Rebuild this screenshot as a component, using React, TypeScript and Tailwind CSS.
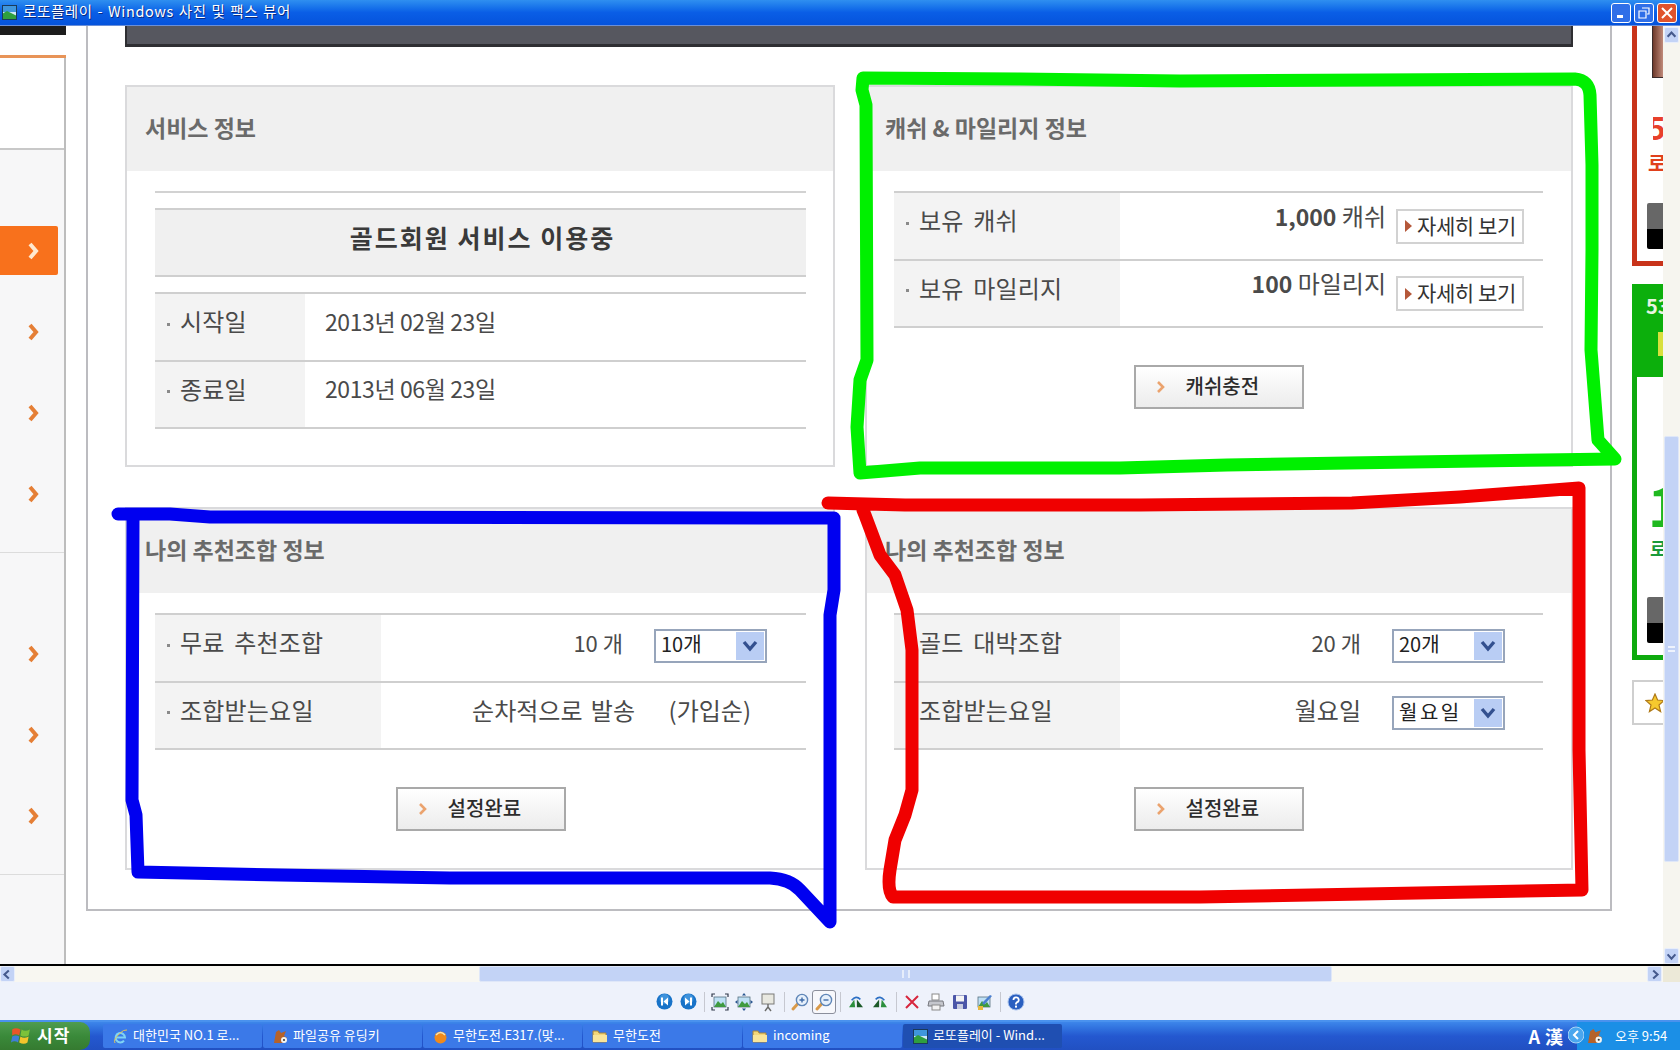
import React from "react";

const Chevron = ({ color = "#e57f36", size = 18 }: { color?: string; size?: number }) => (
  <svg width={size * 0.67} height={size} viewBox="0 0 12 18">
    <polyline points="3,2 9,9 3,16" fill="none" stroke={color} strokeWidth="4" />
  </svg>
);

const SideItem = ({ active = false }: { active?: boolean }) => (
  <div className="h-[81px] flex items-center">
    {active ? (
      <div className="w-[58px] h-[49px] bg-[#f8711c] rounded-r-[2px] flex items-center pl-[27px]">
        <Chevron color="#ffe9cf" />
      </div>
    ) : (
      <div className="pl-[27px] flex items-center">
        <Chevron />
      </div>
    )}
  </div>
);

const Sidebar = () => (
  <div className="w-[66px] h-full flex flex-col shrink-0">
    <div className="h-[9px] bg-[#1c1c1c]" />
    <div className="h-[20px]" />
    <div className="h-[3px] bg-[#e89458]" />
    <div className="flex-1 border-r-2 border-[#bdbdbd] flex flex-col">
      <div className="h-[92px] shrink-0 bg-white border-b-2 border-[#c8c8c8]" />
      <div className="flex-1 bg-[#f7f7f8] flex flex-col">
        <div className="h-[60px]" />
        <SideItem active />
        <SideItem />
        <SideItem />
        <SideItem />
        <div className="mt-[18px] h-[1px] bg-[#dcdcdc]" />
        <div className="h-[60px]" />
        <SideItem />
        <SideItem />
        <SideItem />
        <div className="mt-[18px] h-[1px] bg-[#dcdcdc]" />
      </div>
    </div>
  </div>
);

const Panel = ({ title, children }: { title: string; children: React.ReactNode }) => (
  <div className="border-2 border-[#dadadc] flex flex-col">
    <div className="h-[84px] shrink-0 bg-[#f0f0f0] flex items-center pl-[18px] pb-[4px] text-[23px] leading-none font-bold text-[#6a6a6a]">
      {title}
    </div>
    {children}
  </div>
);

const Row = ({ label, labelW, last = false, children }: { label: string; labelW: string; last?: boolean; children: React.ReactNode }) => (
  <div className={`flex border-t-2 border-[#cfcfcf] ${last ? "border-b-2 h-[69px]" : "h-[68px]"}`}>
    <div className={`${labelW} shrink-0 bg-[#f3f3f3] flex items-center pl-[12px] pb-[12px] text-[24px] text-[#4a4a4a] leading-none`}>
      <span className="w-[3px] h-[3px] bg-[#8a8a8a] mr-[10px] mt-[6px] shrink-0" />
      <span className="tracking-[0.2px] [word-spacing:4px] whitespace-nowrap">{label}</span>
    </div>
    <div className="flex-1 flex items-center text-[24px] text-[#4a4a4a] leading-none">{children}</div>
  </div>
);

const Select = ({ value, wide = false }: { value: string; wide?: boolean }) => (
  <div className="w-[113px] h-[34px] mb-[5px] border-2 border-[#97a5bb] bg-white flex items-center justify-between pl-[5px] pr-[1px] text-[20px] leading-none text-[#222]">
    <span className={`pb-[3px] ${wide ? "tracking-[2.5px]" : ""}`}>{value}</span>
    <span className="w-[28px] h-[28px] bg-[#b9cdf4] flex items-center justify-center">
      <svg width="16" height="12" viewBox="0 0 16 12">
        <polyline points="2,2 8,9 14,2" fill="none" stroke="#33508f" strokeWidth="3.4" />
      </svg>
    </span>
  </div>
);

const DetailBtn = () => (
  <div className="w-[128px] h-[35px] border-2 border-[#d2d2d2] bg-white flex items-center pl-[7px] text-[21px] leading-none text-[#333] shrink-0">
    <svg width="7" height="12" viewBox="0 0 7 12" className="mr-[5px]">
      <polygon points="0,0 7,6 0,12" fill="#b5583a" />
    </svg>
    <span className="pb-[2px] whitespace-nowrap tracking-[-0.4px]">자세히 보기</span>
  </div>
);

const BigBtn = ({ label }: { label: string }) => (
  <div className="w-[170px] h-[44px] mx-auto border-2 border-[#a9a9a9] bg-gradient-to-b from-white to-[#ececec] flex items-center pl-[20px] text-[20px] font-medium leading-none text-[#2c2c2c]">
    <svg width="10" height="14" viewBox="0 0 10 14" className="mr-[20px]">
      <polyline points="2,2 7,7 2,12" fill="none" stroke="#eba36e" strokeWidth="2.6" />
    </svg>
    <span className="pb-[2px]">{label}</span>
  </div>
);

const Main = () => (
  <div className="w-[1526px] h-[885px] ml-[20px] shrink-0 border-2 border-t-0 border-[#bcbcc0] pl-[37px]">
    <div className="w-[1448px] h-[21px] bg-[#56575f] border-b-[3px] border-l-2 border-r-2 border-[#2e2e32]" />
    <div className="grid grid-cols-[710px_708px] grid-rows-[382px_363px] gap-x-[30px] gap-y-[40px] mt-[38px]">
      <Panel title="서비스 정보">
        <div className="ml-[28px] mr-[27px] mt-[20px]">
          <div className="h-[2px] bg-[#d2d2d2]" />
          <div className="mt-[15px] h-[69px] bg-[#f0f0f0] border-y-2 border-[#cfcfcf] flex items-center justify-center pl-[4px] pb-[10px] text-[25px] font-bold tracking-[2px] leading-none text-[#3a3a3a]">
            골드회원 서비스 이용중
          </div>
          <div className="mt-[15px]">
            <Row label="시작일" labelW="w-[150px]">
              <span className="pl-[20px] pb-[12px] text-[23px] tracking-[-0.4px]">2013년 02월 23일</span>
            </Row>
            <Row label="종료일" labelW="w-[150px]" last>
              <span className="pl-[20px] pb-[12px] text-[23px] tracking-[-0.4px]">2013년 06월 23일</span>
            </Row>
          </div>
        </div>
      </Panel>
      <Panel title="캐쉬 & 마일리지 정보">
        <div className="ml-[27px] mr-[28px] mt-[20px]">
          <Row label="보유 캐쉬" labelW="w-[226px]">
            <div className="flex-1 flex items-center justify-end pr-[19px] gap-[10px]">
              <span className="pb-[21px]"><b className="font-bold text-[23px]">1,000</b> 캐쉬</span>
              <DetailBtn />
            </div>
          </Row>
          <Row label="보유 마일리지" labelW="w-[226px]" last>
            <div className="flex-1 flex items-center justify-end pr-[19px] gap-[10px]">
              <span className="pb-[21px]"><b className="font-bold text-[23px]">100</b> 마일리지</span>
              <DetailBtn />
            </div>
          </Row>
          <div className="mt-[37px]"><BigBtn label="캐쉬충전" /></div>
        </div>
      </Panel>
      <Panel title="나의 추천조합 정보">
        <div className="ml-[28px] mr-[27px] mt-[20px]">
          <Row label="무료 추천조합" labelW="w-[226px]">
            <div className="flex-1 flex items-center justify-end pr-[39px] gap-[31px]">
              <span className="pb-[12px] text-[22px]">10 개</span>
              <Select value="10개" />
            </div>
          </Row>
          <Row label="조합받는요일" labelW="w-[226px]" last>
            <div className="flex-1 flex items-center justify-end pr-[55px]">
              <span className="pb-[12px] whitespace-pre [word-spacing:3px]">순차적으로 발송    (가입순)</span>
            </div>
          </Row>
          <div className="mt-[37px]"><BigBtn label="설정완료" /></div>
        </div>
      </Panel>
      <Panel title="나의 추천조합 정보">
        <div className="ml-[27px] mr-[28px] mt-[20px]">
          <Row label="골드 대박조합" labelW="w-[226px]">
            <div className="flex-1 flex items-center justify-end pr-[38px] gap-[31px]">
              <span className="pb-[12px] text-[22px]">20 개</span>
              <Select value="20개" />
            </div>
          </Row>
          <Row label="조합받는요일" labelW="w-[226px]" last>
            <div className="flex-1 flex items-center justify-end pr-[38px] gap-[31px]">
              <span className="pb-[12px]">월요일</span>
              <Select value="월요일" wide />
            </div>
          </Row>
          <div className="mt-[37px]"><BigBtn label="설정완료" /></div>
        </div>
      </Panel>
    </div>
  </div>
);

const AdDark = () => (
  <div className="w-[16px] h-[46px] ml-auto flex flex-col rounded-l-[2px] overflow-hidden shrink-0">
    <div className="h-[26px] bg-[#676767]" />
    <div className="flex-1 bg-black" />
  </div>
);

const Ads = () => (
  <div className="w-[31px] ml-[20px] shrink-0 flex flex-col overflow-hidden">
    <div className="h-[240px] shrink-0 border-l-[5px] border-b-[5px] border-[#c8331a] flex flex-col">
      <div className="w-[11px] h-[52px] ml-auto bg-gradient-to-r from-[#6e3a2c] to-[#c08a7a] border-l border-b border-[#3a2a2a]" />
      <div className="h-[32px]" />
      <div className="ml-auto w-[10px] h-[38px] overflow-hidden text-[#e8402a] font-bold text-[32px] leading-none">
        <span className="block -ml-[6px]">5</span>
      </div>
      <div className="mt-[5px] ml-[11px] w-[15px] overflow-hidden text-[20px] font-bold leading-none text-[#e0401c]">로</div>
      <div className="h-[30px]" />
      <AdDark />
    </div>
    <div className="h-[18px] shrink-0" />
    <div className="h-[376px] shrink-0 border-l-[5px] border-b-[5px] border-[#0eaa0e] flex flex-col">
      <div className="h-[93px] -ml-[5px] bg-[#0caf0c] flex flex-col shrink-0">
        <div className="pl-[14px] pt-[12px] text-[20px] font-bold leading-none text-[#e8f5e0] whitespace-nowrap">53</div>
        <div className="mt-[16px] ml-[26px] w-[5px] h-[24px] bg-[#d8e03c]" />
      </div>
      <div className="h-[100px]" />
      <div className="ml-[11px] w-[15px] overflow-hidden text-[54px] font-bold leading-none text-[#1fb81f]">1</div>
      <div className="mt-[8px] ml-[13px] w-[13px] overflow-hidden text-[18px] font-bold leading-none text-[#1a9a3a]">로</div>
      <div className="h-[40px]" />
      <AdDark />
    </div>
    <div className="h-[20px] shrink-0" />
    <div className="h-[45px] shrink-0 border-2 border-r-0 border-[#cfcfcf] flex items-center justify-end">
      <svg width="20" height="20" viewBox="0 0 20 20" className="-mr-[2px]">
        <polygon points="10,1 12.6,7 19,7.6 14,12 15.6,18.6 10,15 4.4,18.6 6,12 1,7.6 7.4,7" fill="#f6c92e" stroke="#b07a18" strokeWidth="1.2" />
      </svg>
    </div>
  </div>
);

const ScrollBtn = ({ dir }: { dir: "up" | "down" | "left" | "right" }) => {
  const pts = { up: "3,9 7.5,4 12,9", down: "3,5 7.5,10 12,5", left: "9,3 4,7.5 9,12", right: "6,3 11,7.5 6,12" }[dir];
  return (
    <div className="w-[15px] h-[16px] shrink-0 rounded-[2px] bg-[#c3d3f6] border border-[#e8eefb] flex items-center justify-center">
      <svg width="15" height="15" viewBox="0 0 15 15">
        <polyline points={pts} fill="none" stroke="#45598c" strokeWidth="2.4" />
      </svg>
    </div>
  );
};

const VScroll = () => (
  <div className="w-[17px] h-full ml-0 shrink-0 bg-[#f6f5ef] flex flex-col items-center">
    <div className="pt-[1px]"><ScrollBtn dir="up" /></div>
    <div className="h-[393px]" />
    <div className="w-[15px] h-[426px] bg-[#c3d3f6] border border-[#dfe7f8] rounded-[2px] flex items-center justify-center">
      <div className="w-[7px] h-[6px] border-y-2 border-[#eef3fd]" />
    </div>
    <div className="flex-1" />
    <div><ScrollBtn dir="down" /></div>
  </div>
);

const HScroll = () => (
  <div className="h-[16px] flex bg-[#f8f7f1] shrink-0">
    <ScrollBtn dir="left" />
    <div className="w-[464px]" />
    <div className="w-[853px] h-[16px] bg-[#c3d3f6] border border-[#dfe7f8] rounded-[2px] flex items-center justify-center">
      <div className="w-[8px] h-[8px] border-x-2 border-[#e6edfb]" />
    </div>
    <div className="flex-1" />
    <ScrollBtn dir="right" />
    <div className="w-[17px] bg-[#ece9d8] ml-[1px]" />
  </div>
);

const Tool = ({ active = false, children }: { active?: boolean; children: React.ReactNode }) => (
  <div className={`w-[24px] h-[24px] flex items-center justify-center rounded-[3px] ${active ? "border border-[#8b8f9c] bg-[#f7f8fc]" : ""}`}>
    {children}
  </div>
);

const Sep = () => <div className="w-[1px] h-[20px] bg-[#c6c8d0] mx-[3.5px]" />;

const Pic = () => (
  <>
    <rect x="3" y="4" width="12" height="10" fill="#bfe0f5" stroke="#55707f" strokeWidth="0.8" />
    <path d="M3 14 L7 8 L10 11 L12 9 L15 14Z" fill="#3f9a3f" />
  </>
);

const Round = ({ kind }: { kind: "prev" | "next" }) => (
  <svg width="17" height="17" viewBox="0 0 17 17">
    <circle cx="8.5" cy="8.5" r="8" fill="#1873c8" />
    <circle cx="8.5" cy="6" r="5" fill="#5aa8ea" opacity="0.6" />
    {kind === "prev" ? (
      <path d="M5 4.5h2v8H5z M12 4.5v8L7.5 8.5z" fill="#fff" />
    ) : (
      <path d="M10 4.5h2v8h-2z M5 4.5v8L9.5 8.5z" fill="#fff" />
    )}
  </svg>
);

const Magnifier = ({ sign }: { sign: "+" | "-" }) => (
  <svg width="20" height="20" viewBox="0 0 20 20">
    <line x1="3" y1="17" x2="8.5" y2="11" stroke="#d99a4a" strokeWidth="3" strokeLinecap="round" />
    <circle cx="12" cy="8" r="5.6" fill="#e6f0fb" stroke="#5f86b8" strokeWidth="1.4" />
    <path d={sign === "+" ? "M9.5 8h5M12 5.5v5" : "M9.5 8h5"} stroke="#3e6aa8" strokeWidth="1.4" />
  </svg>
);

const Rotate = ({ flip = false }: { flip?: boolean }) => (
  <svg width="16" height="14" viewBox="0 0 18 16" className={flip ? "-scale-x-100" : ""}>
    <path d="M1 14 L7 5 L8 14Z" fill="#2b8f3c" />
    <path d="M10 14 L10 5 L17 14Z" fill="#1c5a28" />
    <path d="M4 6 Q9 0 14 5" fill="none" stroke="#2c6fc4" strokeWidth="1.8" />
  </svg>
);

const Toolbar = () => (
  <div className="h-[38px] bg-[#eef2fb] flex items-center justify-center shrink-0 pt-[1px]">
    <Tool><Round kind="prev" /></Tool>
    <Tool><Round kind="next" /></Tool>
    <Sep />
    <Tool>
      <svg width="18" height="18" viewBox="0 0 18 18">
        <Pic />
        <path d="M1 4V1h3M14 1h3v3M17 14v3h-3M4 17H1v-3" fill="none" stroke="#30384a" strokeWidth="1.2" />
      </svg>
    </Tool>
    <Tool>
      <svg width="18" height="18" viewBox="0 0 18 18">
        <Pic />
        <path d="M9 0l2 2.5H7zM9 18l2-2.5H7zM0 9l2.5-2v4zM18 9l-2.5-2v4z" fill="#27548f" />
      </svg>
    </Tool>
    <Tool>
      <svg width="16" height="20" viewBox="0 0 16 20">
        <rect x="2" y="2" width="12" height="10" fill="#e8e8e0" stroke="#7a7a78" />
        <path d="M8 12v3M8 15l-3 4M8 15l3 4" stroke="#6a6a68" strokeWidth="1.4" />
      </svg>
    </Tool>
    <Sep />
    <Tool><Magnifier sign="+" /></Tool>
    <Tool active><Magnifier sign="-" /></Tool>
    <Sep />
    <Tool><Rotate /></Tool>
    <Tool><Rotate flip /></Tool>
    <Sep />
    <Tool>
      <svg width="16" height="16" viewBox="0 0 16 16">
        <path d="M2 2L14 14M14 2L2 14" stroke="#d7263d" strokeWidth="2" />
      </svg>
    </Tool>
    <Tool>
      <svg width="18" height="18" viewBox="0 0 18 18">
        <rect x="5" y="1" width="7" height="6" fill="#fff" stroke="#8a8a8a" />
        <path d="M2 8h14l1 5H1z" fill="#c4c6cc" stroke="#77797f" />
        <rect x="5" y="12" width="8" height="5" fill="#f2f2f2" stroke="#8a8a8a" />
      </svg>
    </Tool>
    <Tool>
      <svg width="16" height="16" viewBox="0 0 16 16">
        <rect x="1" y="1" width="14" height="14" rx="1" fill="#4b56a8" />
        <rect x="4" y="1.5" width="8" height="6" fill="#f4f4f4" />
        <rect x="5" y="10" width="6" height="5" fill="#c8cce0" />
      </svg>
    </Tool>
    <Tool>
      <svg width="18" height="18" viewBox="0 0 18 18">
        <Pic />
        <path d="M9 12L17 3l-2-1-8 8z" fill="#4a7fd0" />
        <rect x="3" y="13" width="5" height="4" fill="#e8b93e" />
      </svg>
    </Tool>
    <Sep />
    <Tool>
      <svg width="18" height="18" viewBox="0 0 18 18">
        <circle cx="9" cy="9" r="8" fill="#2a5fc0" stroke="#a8c2ec" />
        <path d="M6.5 7 A2.6 2.6 0 1 1 9.8 9.4 L9 10.5 V11.5" fill="none" stroke="#fff" strokeWidth="1.8" />
        <rect x="8" y="12.6" width="2" height="2" fill="#fff" />
      </svg>
    </Tool>
  </div>
);

const Landscape = () => (
  <svg width="15" height="15" viewBox="0 0 15 15">
    <rect width="15" height="15" fill="#cfe8f8" />
    <rect width="15" height="7" fill="#3f96dc" />
    <path d="M0 9 L5 6 L15 11 V15 H0Z" fill="#2f9f3f" />
    <rect x="0.5" y="0.5" width="14" height="14" fill="none" stroke="#1a3a5a" />
  </svg>
);

const Folder = () => (
  <svg width="16" height="14" viewBox="0 0 16 14">
    <path d="M1 2h5l1 2h7v9H1z" fill="#f3d77a" stroke="#a8843a" />
    <path d="M1 6h14v7H1z" fill="#f9e59a" />
  </svg>
);

const Donkey = ({ s = 15 }: { s?: number }) => (
  <svg width={s} height={s} viewBox="0 0 15 15">
    <path d="M1 14 L3 3 L6 1 L8 4 L13 2 L11 7 L14 9 L10 14Z" fill="#b5622a" />
    <circle cx="11" cy="11" r="3" fill="#f4f4f0" />
    <circle cx="11" cy="11" r="1" fill="#333" />
  </svg>
);

const Task = ({ icon, label, active = false }: { icon: React.ReactNode; label: string; active?: boolean }) => (
  <div className={`w-[159px] h-[24px] shrink-0 rounded-[2px] flex items-center pl-[9px] gap-[5px] text-[13px] leading-none text-white whitespace-nowrap overflow-hidden ${active ? "bg-[#1f4fb2]" : "bg-[#3b79e8]"}`}>
    <span className="w-[16px] flex justify-center shrink-0">{icon}</span>
    <span className="pb-[3px]">{label}</span>
  </div>
);

const Taskbar = () => (
  <div className="h-[30px] shrink-0 bg-gradient-to-b from-[#3d86ea] via-[#2458d0] to-[#2150c2] flex items-center border-t-2 border-[#4a92ee]">
    <div className="w-[90px] h-full shrink-0 rounded-r-[10px] bg-gradient-to-b from-[#4f9c4f] via-[#3a8a3a] to-[#357a30] flex items-center pl-[11px] gap-[6px]">
      <svg width="20" height="20" viewBox="0 0 17 17">
        <path d="M1 3 Q4 1 8 3 L7 8 Q4 6 1 8Z" fill="#e8562a" />
        <path d="M9 3 Q12 5 16 3 L15 8 Q12 10 8 8Z" fill="#7cc23a" />
        <path d="M1 9 Q4 7 7 9 L6 14 Q3 12 0 14Z" fill="#3f7fd8" />
        <path d="M8 9 Q11 11 15 9 L14 14 Q11 16 7 14Z" fill="#f4c52c" />
      </svg>
      <span className="text-[17px] font-bold leading-none text-white tracking-[1px] pb-[3px]">시작</span>
    </div>
    <div className="ml-[13px] flex gap-[1px]">
      <Task
        label="대한민국 NO.1 로..."
        icon={
          <svg width="15" height="15" viewBox="0 0 15 15">
            <path d="M3 8.5h9A4.7 4.7 0 1 0 11 11.6" fill="none" stroke="#7fd4f4" strokeWidth="2" />
            <path d="M2 14 Q0 11 6 5 Q11 0 14 1" fill="none" stroke="#e4c458" strokeWidth="1" />
          </svg>
        }
      />
      <Task label="파일공유 유딩키" icon={<Donkey />} />
      <Task
        label="무한도전.E317.(맞..."
        icon={
          <svg width="15" height="15" viewBox="0 0 15 15">
            <circle cx="7.5" cy="8.5" r="6" fill="#f08a1c" />
            <path d="M3 6 Q7.5 1 12 6" fill="none" stroke="#f6e4b0" strokeWidth="1.6" />
          </svg>
        }
      />
      <Task label="무한도전" icon={<Folder />} />
      <Task label="incoming" icon={<Folder />} />
      <Task label="로또플레이 - Wind..." icon={<Landscape />} active />
    </div>
    <div className="flex-1 flex justify-end items-center pr-[14px] text-white text-[18px] font-bold leading-none gap-[5px]">
      <span>A</span>
      <span>漢</span>
    </div>
    <div className="w-[103px] h-full shrink-0 bg-[#1b8fe6] flex items-center text-[13px] leading-none text-white relative">
      <svg width="16" height="18" viewBox="0 0 16 18" className="absolute -left-[9px] top-[4px]">
        <circle cx="8" cy="9" r="8" fill="#4aa6ee" stroke="#a8d4f6" />
        <polyline points="10,5 6,9 10,13" fill="none" stroke="#fff" strokeWidth="2" />
      </svg>
      <span className="ml-[10px]"><Donkey s={16} /></span>
      <span className="ml-[12px] pb-[2px] whitespace-nowrap">오후 9:54</span>
    </div>
  </div>
);

const TitleBtn = ({ close = false, children }: { close?: boolean; children: React.ReactNode }) => (
  <div className={`w-[20px] h-[20px] rounded-[3px] border border-white flex items-center justify-center ${close ? "bg-[#e0532c]" : "bg-[#2f6fe8]"}`}>
    {children}
  </div>
);

const TitleBar = () => (
  <div className="h-[26px] shrink-0 bg-gradient-to-b from-[#2f8ff0] via-[#0a5ee6] to-[#0553dc] flex items-center pl-[2px] pr-[3px] border-b border-[#6a8fd8]">
    <Landscape />
    <span className="ml-[6px] pb-[2px] text-[14.5px] leading-none text-white tracking-[0.6px] [word-spacing:1px] [text-shadow:1px_1px_0_#0a2a80]">로또플레이 - Windows 사진 및 팩스 뷰어</span>
    <div className="flex-1" />
    <div className="flex gap-[3px]">
      <TitleBtn><div className="w-[6px] h-[3px] bg-white mt-[8px] -ml-[3px]" /></TitleBtn>
      <TitleBtn>
        <svg width="12" height="12" viewBox="0 0 12 12">
          <path d="M4 1h7v6H9M1 4h7v7H1z" fill="none" stroke="#fff" strokeWidth="1.2" />
        </svg>
      </TitleBtn>
      <TitleBtn close>
        <svg width="12" height="12" viewBox="0 0 12 12">
          <path d="M1 1L11 11M11 1L1 11" stroke="#fff" strokeWidth="2" />
        </svg>
      </TitleBtn>
    </div>
  </div>
);

const Strokes = () => (
  <svg className="absolute left-0 top-0 pointer-events-none" width="1680" height="1050" viewBox="0 0 1680 1050">
    <g fill="none" strokeLinejoin="round" strokeLinecap="round" strokeWidth="13">
      <path
        stroke="#00f000"
        d="M863 78 L1020 79 L1180 81 L1575 79 Q1589 80 1590 95 L1592 165 L1592 250 L1591 350 L1598 440 L1615 459 L1348 463 L1227 465 L1120 468 L920 468 L860 473 L857 427 L860 380 L867 360 L866 105 L862 90Z"
      />
      <path
        stroke="#0000f0"
        d="M118 514 L170 514 L210 517 L834 518 L834 590 L830 615 L830 922 L800 890 Q790 879 770 878 L450 878 L280 875 L138 872 L136 815 L132 800 L133 520"
      />
      <path
        stroke="#f00000"
        d="M828 503 L905 505 L1140 505 L1352 503 L1460 497 L1579 488 L1579 750 L1582 890 L1200 897 L893 897 Q887 890 890 870 L895 840 L905 815 L912 790 L912 650 L907 610 L895 575 L880 555 L865 515 L863 510"
      />
    </g>
  </svg>
);

export default function App() {
  return (
    <div className="relative w-[1680px] h-[1050px] overflow-hidden flex flex-col bg-white font-['Noto_Sans_CJK_KR','Liberation_Sans',sans-serif]">
      <TitleBar />
      <div className="h-[940px] shrink-0 flex border-b-2 border-black overflow-hidden">
        <Sidebar />
        <Main />
        <Ads />
        <VScroll />
      </div>
      <HScroll />
      <Toolbar />
      <Taskbar />
      <Strokes />
    </div>
  );
}
